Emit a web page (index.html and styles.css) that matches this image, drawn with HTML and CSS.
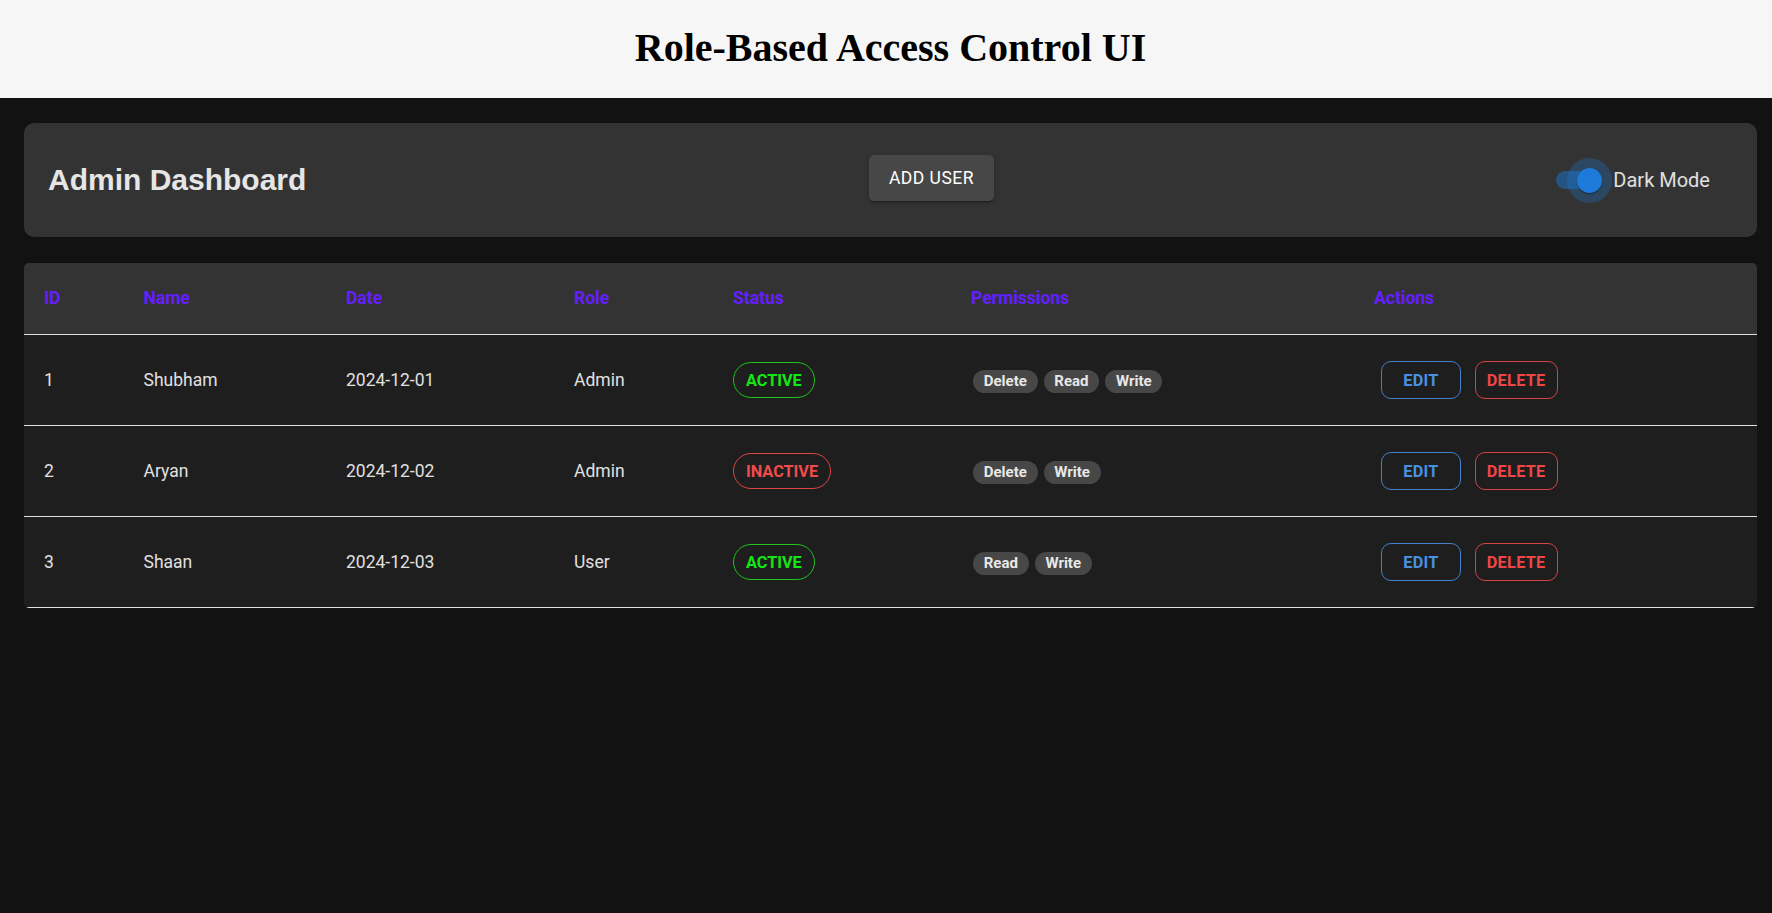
FILE: index.html
```html
<!DOCTYPE html>
<html lang="en">
<head>
<meta charset="utf-8">
<title>Role-Based Access Control UI</title>
<link rel="stylesheet" href="styles.css">
</head>
<body>
<header class="top">
  <h1 class="title">Role-Based Access Control UI</h1>
</header>
<main class="page">
  <section class="toolbar">
    <h2 class="toolbar-title">Admin Dashboard</h2>
    <button class="add-btn">ADD USER</button>
    <label class="mode">
      <span class="switch">
        <span class="switch-track"></span>
        <span class="switch-halo"></span>
        <span class="switch-thumb"></span>
      </span>
      <span class="mode-text">Dark Mode</span>
    </label>
  </section>

  <div class="table-wrap">
    <table class="users">
      <colgroup>
        <col class="c-id"><col class="c-name"><col class="c-date"><col class="c-role"><col class="c-status"><col class="c-perm"><col class="c-act">
      </colgroup>
      <thead>
        <tr>
          <th>ID</th><th>Name</th><th>Date</th><th>Role</th><th>Status</th><th>Permissions</th><th>Actions</th>
        </tr>
      </thead>
      <tbody>
        <tr>
          <td>1</td><td>Shubham</td><td>2024-12-01</td><td>Admin</td>
          <td><span class="status status-active">ACTIVE</span></td>
          <td><span class="perms"><span class="perm">Delete</span><span class="perm">Read</span><span class="perm">Write</span></span></td>
          <td><span class="actions"><button class="act act-edit">EDIT</button><button class="act act-del">DELETE</button></span></td>
        </tr>
        <tr>
          <td>2</td><td>Aryan</td><td>2024-12-02</td><td>Admin</td>
          <td><span class="status status-inactive">INACTIVE</span></td>
          <td><span class="perms"><span class="perm">Delete</span><span class="perm">Write</span></span></td>
          <td><span class="actions"><button class="act act-edit">EDIT</button><button class="act act-del">DELETE</button></span></td>
        </tr>
        <tr>
          <td>3</td><td>Shaan</td><td>2024-12-03</td><td>User</td>
          <td><span class="status status-active">ACTIVE</span></td>
          <td><span class="perms"><span class="perm">Read</span><span class="perm">Write</span></span></td>
          <td><span class="actions"><button class="act act-edit">EDIT</button><button class="act act-del">DELETE</button></span></td>
        </tr>
      </tbody>
    </table>
  </div>
</main>
</body>
</html>
```

FILE: styles.css
```css
* { box-sizing: border-box; }

html, body {
  margin: 0;
  padding: 0;
}

body {
  background: #121212;
  min-height: 100vh;
  font-family: Roboto, "Liberation Sans", Arial, sans-serif;
  color: #e0e0e0;
}

.top {
  background: #f6f6f6;
  padding: 25px 15px 27px 24px;
  text-align: center;
}

.title {
  margin: 0;
  font-family: "Liberation Serif", "Times New Roman", serif;
  font-weight: 700;
  font-size: 40px;
  line-height: 46px;
  color: #000;
}

.page {
  padding: 25px 15px 0 24px;
}

.toolbar {
  height: 114px;
  background: #333333;
  border-radius: 10px;
  padding: 0 25px;
  display: flex;
  align-items: center;
  justify-content: space-between;
}

.toolbar-title {
  margin: 0 0 0 -1px;
  font-family: "Liberation Sans", Arial, Helvetica, sans-serif;
  font-weight: 700;
  font-size: 30px;
  line-height: 36px;
  color: #e6e6e6;
}

.add-btn {
  height: 46px;
  padding: 0 20px;
  border: none;
  border-radius: 5px;
  background: #474747;
  color: #ffffff;
  font-family: Roboto, sans-serif;
  font-weight: 400;
  font-size: 17.5px;
  letter-spacing: 0.5px;
  box-shadow: 0 3px 1px -2px rgba(0,0,0,0.2), 0 2px 2px 0 rgba(0,0,0,0.14), 0 1px 5px 0 rgba(0,0,0,0.12);
  margin-top: -4px;
  margin-left: 2px;
}

.mode {
  display: inline-flex;
  align-items: center;
  margin-right: 22px;
}

.switch {
  position: relative;
  width: 72.5px;
  height: 47.5px;
  margin-left: -13.75px;
  flex: none;
}

.switch-track {
  position: absolute;
  left: 15px;
  top: 15px;
  width: 42.5px;
  height: 17.5px;
  border-radius: 9px;
  background: rgba(25, 118, 210, 0.5);
}

.switch-halo {
  position: absolute;
  left: 26.25px;
  top: 1.25px;
  width: 45px;
  height: 45px;
  border-radius: 50%;
  background: rgba(25, 118, 210, 0.3);
}

.switch-thumb {
  position: absolute;
  left: 36.25px;
  top: 11.25px;
  width: 25px;
  height: 25px;
  border-radius: 50%;
  background: #1e7ad9;
  box-shadow: 0 2px 1px -1px rgba(0,0,0,0.2), 0 1px 1px 0 rgba(0,0,0,0.14), 0 1px 3px 0 rgba(0,0,0,0.12);
}

.mode-text {
  font-family: Roboto, sans-serif;
  font-size: 20px;
  color: #e0e0e0;
}

.table-wrap {
  margin-top: 26px;
  border-radius: 5px;
  overflow: hidden;
  background: #1e1e1e;
}

.users {
  width: 100%;
  border-collapse: collapse;
  table-layout: fixed;
}

.c-id { width: 99.5px; }
.c-name { width: 202.5px; }
.c-date { width: 228px; }
.c-role { width: 159px; }
.c-status { width: 238px; }
.c-perm { width: 403px; }

.users th {
  background: #333333;
  color: #651fff;
  font-weight: 700;
  font-size: 17.5px;
  line-height: 31px;
  text-align: left;
  padding: 20px;
  border-bottom: 1px solid #e0e0e0;
}

.users td {
  padding: 20px;
  font-size: 17.5px;
  line-height: 25px;
  height: 91px;
  color: #e0e0e0;
  border-bottom: 1px solid #e0e0e0;
  vertical-align: middle;
}

.status {
  display: inline-flex;
  align-items: center;
  height: 36px;
  padding: 0 12px;
  border: 1.5px solid;
  border-radius: 18px;
  font-weight: 700;
  font-size: 16.25px;
  vertical-align: middle;
}

.status-active {
  color: #14e814;
  border-color: #1fc41f;
}

.status-inactive {
  color: #f24b4b;
  border-color: #dd4646;
}

.perms {
  display: inline-flex;
  gap: 6px;
  vertical-align: middle;
  margin: 2px 0 0 2px;
}

.perm {
  display: inline-flex;
  align-items: center;
  height: 23px;
  padding: 0 10.75px;
  border-radius: 12px;
  background: #474747;
  color: #e8e8e8;
  font-weight: 700;
  font-size: 15px;
}

.actions {
  display: inline-flex;
  gap: 13.5px;
  margin: 6px 0 6px 7px;
  vertical-align: middle;
}

.act {
  display: inline-flex;
  align-items: center;
  justify-content: center;
  height: 37.5px;
  min-width: 80px;
  padding: 0 11.25px;
  background: transparent;
  border: 1.25px solid;
  border-radius: 10px;
  font-family: Roboto, sans-serif;
  font-weight: 700;
  font-size: 16.25px;
  letter-spacing: 0.3px;
}

.act-edit {
  color: #4a90e2;
  border-color: #4481c9;
}

.act-del {
  color: #ef4646;
  border-color: #d44444;
}
```
